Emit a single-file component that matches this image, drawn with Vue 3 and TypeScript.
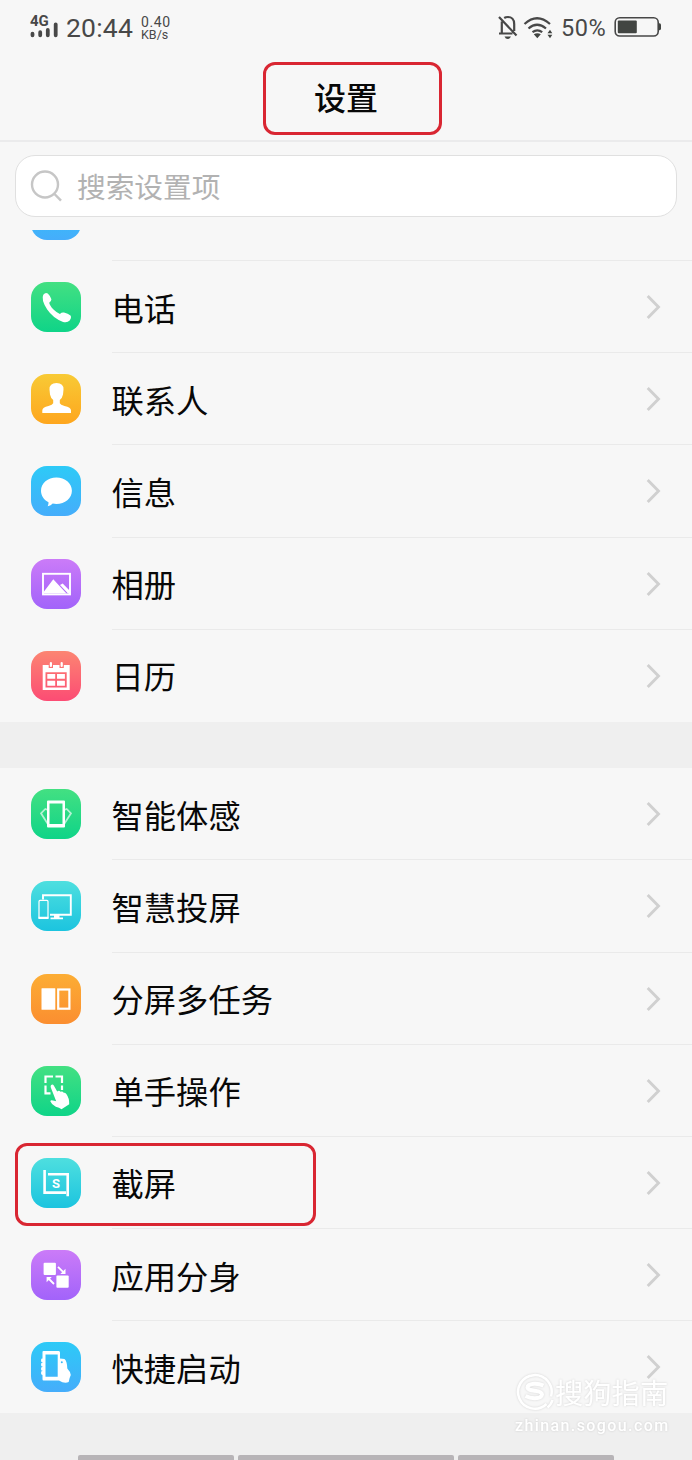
<script setup lang="ts">
type IconName =
  | 'phone' | 'contact' | 'message' | 'album' | 'calendar' | 'motion'
  | 'cast' | 'split' | 'onehand' | 'capture' | 'clone' | 'quick'

interface Item {
  icon: IconName
  label: string
  tone: string
  marked?: boolean
}

const groups: Item[][] = [
  [
    { icon: 'phone', label: '电话', tone: 'green' },
    { icon: 'contact', label: '联系人', tone: 'yellow' },
    { icon: 'message', label: '信息', tone: 'blue' },
    { icon: 'album', label: '相册', tone: 'purple' },
    { icon: 'calendar', label: '日历', tone: 'red' },
  ],
  [
    { icon: 'motion', label: '智能体感', tone: 'green' },
    { icon: 'cast', label: '智慧投屏', tone: 'cyan' },
    { icon: 'split', label: '分屏多任务', tone: 'orange' },
    { icon: 'onehand', label: '单手操作', tone: 'green' },
    { icon: 'capture', label: '截屏', tone: 'cyan', marked: true },
    { icon: 'clone', label: '应用分身', tone: 'purple' },
    { icon: 'quick', label: '快捷启动', tone: 'blue' },
  ],
]
</script>

<template>
  <div class="screen">
    <header class="top">
      <div class="status">
        <div class="signal">
          <span class="net">4G</span>
          <svg width="28" height="16" viewBox="0 0 28 16">
            <path d="M2.500 11.700V13.300M10.200 10.200V13.300M17.800 8V13.300M25.700 2.300V13.300" />
          </svg>
        </div>
        <span class="time">20:44</span>
        <div class="speed"><span class="num">0.40</span><span class="unit">KB/s</span></div>
        <div class="right">
          <svg class="bell" width="22" height="26" viewBox="0 0 22 26">
            <path d="M4.800 7.500V19M17.200 17V10C17.200 5.500 14.500 3 11 3C9.500 3 8.200 3.300 7.200 4M2 19.500H15.500M2 3L19.500 21.500" />
            <path class="solid" d="M7.500 22.500H14Q13 25 10.800 25Q8.500 25 7.500 22.500Z" />
          </svg>
          <svg class="wifi" width="30" height="24" viewBox="0 0 30 24">
            <path d="M1.500 8Q14 -3.500 27 8M5.500 12.500Q14 5 23 12.500M9.500 16.200Q14.300 12.500 19.200 16.200" />
            <path class="solid" d="M10.800 18.300Q14.300 16 17.800 18.300L14.300 22.200ZM24.500 17.300L27 13.800L29.300 17.300ZM24.500 18.800H29.300L27 22.200Z" />
          </svg>
          <span class="percent">50%</span>
          <svg class="battery" width="48" height="22" viewBox="0 0 48 22">
            <rect x="1.200" y="1.800" width="43" height="18.200" rx="4.500" />
            <rect class="solid" x="3.800" y="4.500" width="19" height="12.700" rx="1" />
            <path class="solid" d="M44.500 7.200H45.500Q47 7.500 47 9V12.500Q47 14 45.500 14.300H44.500Z" />
          </svg>
        </div>
      </div>
      <h1 class="title">设置</h1>
      <div class="mark title-mark"></div>
    </header>

    <div class="search">
      <svg width="34" height="34" viewBox="0 0 34 34">
        <circle cx="15" cy="15.500" r="13" />
        <path d="M24.500 25L31 31.700" />
      </svg>
      <span>搜索设置项</span>
    </div>

    <div class="cut">
      <div class="tile blue"></div>
    </div>

    <template v-for="(group, g) in groups" :key="g">
      <div class="group">
        <div v-for="item in group" :key="item.label" class="row">
          <div class="tile" :class="item.tone">
            <svg width="50" height="50" viewBox="0 0 50 50">
              <path
                v-if="item.icon === 'phone'" class="f"
                d="M12.300 12.700Q14.500 10 16.800 11.600Q19.500 14.200 20.400 17.300Q20.500 19 18.200 20.700Q18.700 23.500 22.500 27.500Q26 31 28.900 31.900Q31 30 33 30.600Q37 31.700 39.500 33.500Q40.800 35.300 38.700 38.500Q36 41.200 31.500 39.700Q22 36 16.200 27.500Q9.800 17.500 12.300 12.700Z"
              />
              <path
                v-else-if="item.icon === 'contact'" class="f"
                d="M25.500 9Q32.700 9 32.500 15.500L32 20.500Q31.300 24 28.800 26V29.300Q29.500 31 33.500 32Q40 33.300 40 36.500V39H11.300V36.500Q11.300 33.300 17.500 32Q21.500 31 22.200 29.300V26Q19.700 24 19 20.500L18.500 15.500Q18.300 9 25.500 9Z"
              />
              <path
                v-else-if="item.icon === 'message'" class="f"
                d="M25.400 11.500C34 11.500 40.900 17.300 40.900 24.700S34 38 25.400 38Q23.500 38 21.700 37.600Q20 39.600 16.700 40.300Q17.700 38.500 17.500 36.200C13 34 10 29.700 10 24.700C10 17.300 16.800 11.500 25.400 11.500Z"
              />
              <g v-else-if="item.icon === 'album'">
                <rect class="s" x="12" y="14.800" width="27" height="20.600" stroke-width="1.900" />
                <path class="f" d="M13 34.500V32.500L22.300 20.300L27.800 26.200L35.500 34.500ZM29 26L31.700 24.500L38.500 31.500V34.500H37Z" />
              </g>
              <g v-else-if="item.icon === 'calendar'">
                <path class="f" fill-rule="evenodd" d="M11.700 14H17.700V17H22V14H28.500V17H32.800V14H38.700V39H11.700ZM14.500 21.200V36.500H35.700V21.200Z" />
                <path class="s" stroke-width="2.200" stroke-linecap="round" d="M19.900 12V15M30.700 12V15" />
                <path class="f" d="M16.300 23H24.200V27.700H16.300ZM26 23H33.900V27.700H26ZM16.300 29.800H24.200V34.700H16.300ZM26 29.800H33.900V34.700H26Z" />
              </g>
              <g v-else-if="item.icon === 'motion'">
                <path class="s" stroke-width="1.700" opacity=".65" d="M17 21L14.300 20L10 24.300L16.500 34.500M33 21L35.700 20L40 24.300L33.500 34.500" />
                <path class="f" fill-rule="evenodd" d="M16 12.500Q16 11.500 17 11.500H33Q34 11.500 34 12.500V37.500Q34 38.500 33 38.500H17Q16 38.500 16 37.500ZM18.500 14.500V35H31.500V14.500Z" />
              </g>
              <g v-else-if="item.icon === 'cast'">
                <path class="s" stroke-width="1.900" d="M12 18.500V14.300H39.800V33.800H19" />
                <rect class="s" x="8" y="19.400" width="9" height="18" rx="1" stroke-width="1.200" />
                <path class="f" d="M7.500 35.800H17.500V38H7.500ZM23 34H28.500V36.500H32V38.200H19.500V36.500H23Z" />
              </g>
              <g v-else-if="item.icon === 'split'">
                <rect class="f" x="10.500" y="14.300" width="13.800" height="21.400" rx=".5" />
                <rect class="s" x="27.200" y="15.500" width="11.200" height="19.200" stroke-width="2.200" />
              </g>
              <g v-else-if="item.icon === 'onehand'">
                <path class="s" stroke-width="2.200" d="M14.500 17V10.500H22M24.500 10.500H31V17M31 19.500V24M14.500 19.500V27.300H19.500" />
                <path class="f" d="M20.200 19Q21.600 17.800 22.800 19.500L26.200 25.500Q28 23.900 29.500 25.700Q31.500 24.700 32.700 26.800Q34.700 26.300 35.500 28.300Q38.500 32.500 38.200 38.200L30.500 43.200Q28.300 41.500 24.800 40.800Q20.500 38.500 19.300 35.200Q19.700 33.700 22 34.500L25.200 35.300L19.800 21.500Q19.300 19.800 20.200 19Z" />
              </g>
              <g v-else-if="item.icon === 'capture'">
                <path class="s" stroke-width="2.600" d="M13.600 12V34.600H35" />
                <path class="s" stroke-width="2.600" d="M17 16.200H36.700V38.200" />
                <text x="25" y="30" text-anchor="middle">S</text>
              </g>
              <g v-else-if="item.icon === 'clone'">
                <rect class="f" x="12.600" y="12.800" width="12.300" height="12.300" rx="1" />
                <rect class="f" x="25.400" y="25.400" width="12.300" height="12.300" rx="1" />
                <path class="s" stroke-width="1.800" d="M27 16.800L32 21.800M23 34L18 29" />
                <path class="f" d="M34.500 18.800V24H29.300ZM15.600 32.200V27H20.800Z" />
              </g>
              <g v-else>
                <path class="f" fill-rule="evenodd" d="M11.500 10Q11.500 9 12.500 9H27.800Q29 9 29 10.500V16.500L33.500 17Q36 18.500 36.300 26.500Q39.300 29.500 39.800 33Q38.300 36 37.700 40Q33.500 42 28 38.500H12.500Q11.500 38.500 11.500 37.200ZM14.500 12.500V34.800H26.700V12.500Z" />
                <path class="s" stroke-width="2.600" stroke-linecap="round" d="M11.400 17.800V19M11.400 22V23.200M11.400 26.200V27.400M11.400 30.400V31.600" />
                <circle class="dot" cx="30.800" cy="20.300" r="1" />
              </g>
            </svg>
          </div>
          <span class="label">{{ item.label }}</span>
          <svg class="chevron" width="18" height="28" viewBox="0 0 18 28">
            <path d="M3.700 3L14.500 14L3.700 25" />
          </svg>
          <div v-if="item.marked" class="mark row-mark"></div>
        </div>
      </div>
      <div v-if="g === 0" class="gap"></div>
    </template>

    <footer class="bottom">
      <i class="side"></i><i class="mid"></i><i class="side"></i>
    </footer>

    <div class="watermark">
      <div class="brand">
        <svg width="40" height="40" viewBox="0 0 40 40">
          <path d="M31.500 32A16.800 16.800 0 1 1 36 24.500" />
          <path d="M32.500 35.500Q36 33 37.500 28" />
          <path class="ess" d="M28.500 13.500Q24 11.500 19 11.800Q12.500 12.500 12.500 15.500Q13 18 19.500 18.700Q27 19.500 27 22.500Q26.500 26 20 26.200Q15 26.300 10.500 24" />
        </svg>
        <span>搜狗指南</span>
      </div>
      <div class="site">zhinan.sogou.com</div>
    </div>
  </div>
</template>

<style>
body {
  margin: 0;
  background: #f7f7f7;
}
</style>

<style scoped>
.screen {
  position: relative;
  box-sizing: border-box;
  width: 692px;
  height: 1460px;
  overflow: hidden;
  display: flex;
  flex-direction: column;
  background: #f7f7f7;
  font-family: "Noto Sans CJK SC", sans-serif;
  color: #080808;
}
.top {
  position: relative;
  box-sizing: border-box;
  height: 142px;
  flex: none;
  border-bottom: 2px solid #ebebec;
}
.status {
  display: flex;
  height: 56px;
  padding: 0 30px;
  align-items: center;
  font-family: Roboto, sans-serif;
  color: #484848;
}
.signal {
  width: 28px;
  height: 28px;
  margin-right: 8px;
}
.net {
  display: block;
  height: 12px;
  font: 700 15px/14px Roboto, sans-serif;
}
.signal svg {
  display: block;
  margin-top: -4px;
}
.signal path {
  fill: none;
  stroke: #484848;
  stroke-width: 3.800;
  stroke-linecap: round;
}
.time {
  font-size: 26.500px;
  line-height: 30px;
  letter-spacing: .2px;
  width: 75px;
}
.speed {
  display: flex;
  flex-direction: column;
}
.num {
  font-size: 14px;
  line-height: 14px;
  letter-spacing: .6px;
}
.unit {
  font-size: 12.500px;
  line-height: 12px;
}
.right {
  margin-left: auto;
  display: flex;
  align-items: center;
}
.right svg path,
.right svg rect {
  fill: none;
  stroke: #484848;
  stroke-width: 2.200;
}
.right svg .solid {
  fill: #424542;
  stroke: none;
}
.right .battery rect {
  stroke-width: 1.600;
}
.right .battery .solid {
  stroke-width: 0;
}
.bell {
  margin-right: 4px;
  margin-top: -2px;
}
.wifi {
  margin-top: -1px;
}
.percent {
  width: 53px;
  margin-left: 8px;
  font-size: 23.500px;
  letter-spacing: .5px;
  line-height: 28px;
}
.battery {
  margin-top: -2px;
}
.title {
  margin: 16px 0 0;
  font-size: 32px;
  font-weight: 500;
  line-height: 48px;
  text-align: center;
}
.mark {
  position: absolute;
  box-sizing: border-box;
  border: 3px solid #d92632;
  border-radius: 12px;
}
.title-mark {
  left: 263px;
  top: 62px;
  width: 179px;
  height: 73px;
}
.search {
  box-sizing: border-box;
  flex: none;
  height: 62px;
  margin: 13px 15px 0;
  padding-left: 14px;
  display: flex;
  align-items: center;
  border: 1.500px solid #e0e0e0;
  border-radius: 20px;
  background: #fff;
  color: #b2b2b2;
  font-size: 28.700px;
  line-height: 40px;
}
.search svg {
  margin-right: 13px;
  fill: none;
  stroke: #c6c6c6;
  stroke-width: 2.400;
}
.cut {
  flex: none;
  height: 31px;
  margin-top: 13px;
  padding-left: 30.500px;
  display: flex;
  flex-direction: column;
  justify-content: flex-end;
  overflow: hidden;
  position: relative;
}
.cut .tile {
  margin-bottom: 21px;
}
.cut::after {
  content: "";
  position: absolute;
  left: 112px;
  right: 0;
  bottom: 0;
  height: 1px;
  background: #eaeaea;
}
.group {
  flex: none;
}
.row {
  position: relative;
  box-sizing: border-box;
  height: 92.200px;
  padding: 0 30px 0 30.500px;
  display: flex;
  align-items: center;
}
.row + .row::before {
  content: "";
  position: absolute;
  left: 112px;
  right: 0;
  top: -1px;
  height: 1px;
  background: #eaeaea;
}
.tile {
  flex: none;
  width: 50px;
  height: 50px;
  border-radius: 16px;
}
.tile svg {
  display: block;
}
.green { background: linear-gradient(#43e082, #0fd488); }
.yellow { background: linear-gradient(#f8ca35, #fea61e); }
.blue { background: linear-gradient(#2dcaf7, #45adfb); }
.purple { background: linear-gradient(#cb7bf8, #a263fa); }
.red { background: linear-gradient(#fc8572, #fc4c74); }
.cyan { background: linear-gradient(#4edfdf, #1cc4df); }
.orange { background: linear-gradient(#fcad34, #fb8e30); }
.f {
  fill: #fff;
}
.s {
  fill: none;
  stroke: #fff;
}
.dot {
  fill: #3bb9f9;
}
.tile text {
  fill: #fff;
  font: 700 13px Roboto, sans-serif;
}
.label {
  margin-left: 31px;
  margin-top: -1px;
  font-size: 32.300px;
  line-height: 46px;
}
.chevron {
  margin-left: auto;
  fill: none;
  stroke: #d0d0d0;
  stroke-width: 2.900;
}
.row-mark {
  left: 15px;
  top: 6px;
  width: 301px;
  height: 83px;
}
.gap {
  flex: none;
  height: 46.200px;
  background: #efefef;
}
.bottom {
  flex: 1;
  display: flex;
  align-items: flex-end;
  gap: 4px;
  padding-left: 78px;
  background: #efefef;
}
.bottom i {
  height: 5px;
  border-radius: 2px 2px 0 0;
  background: #b7b4b7;
}
.side {
  width: 156px;
}
.mid {
  width: 216px;
}
.watermark {
  position: absolute;
  left: 515px;
  top: 1373px;
  color: #fff;
  filter: drop-shadow(0 0 1px rgba(0, 0, 0, .14));
}
.brand {
  display: flex;
  align-items: center;
  height: 38px;
  font-size: 28.300px;
  line-height: 38px;
}
.brand svg {
  fill: none;
  stroke: #fff;
  stroke-width: 2.500;
}
.brand .ess {
  stroke-width: 4;
}
.site {
  margin-top: 4px;
  font: 500 16px/22px Roboto, sans-serif;
  letter-spacing: 1.400px;
}
</style>
